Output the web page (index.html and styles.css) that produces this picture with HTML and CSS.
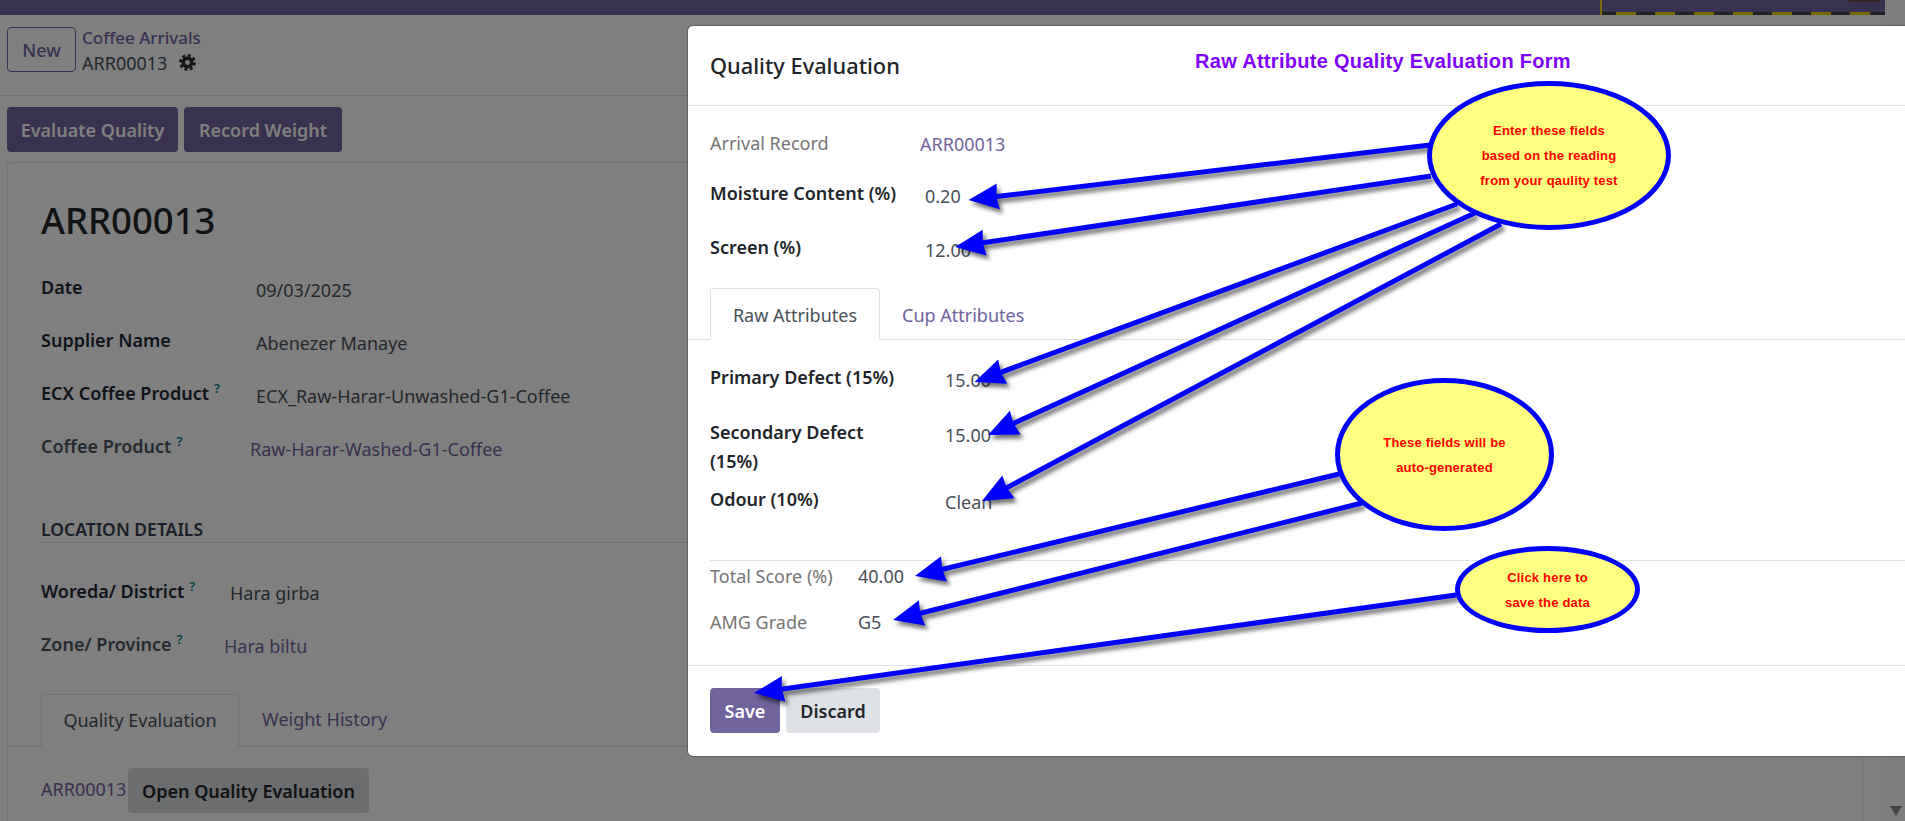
FILE: index.html
```html
<!DOCTYPE html>
<html lang="en">
<head>
<meta charset="utf-8">
<title>Coffee Arrivals - ARR00013</title>
<link rel="stylesheet" href="styles.css">
</head>
<body>
<div class="page">
  <header class="topbar"><div class="capture-box"><span class="blob"></span></div></header>
  <div class="control">
    <button class="btn btn-new">New</button>
    <div class="crumbs">
      <a class="crumb-link">Coffee Arrivals</a>
      <div class="crumb-cur">ARR00013
        <svg class="gear" viewBox="0 0 16 16"><circle cx="8" cy="8" r="4" fill="none" stroke="#2e2e2e" stroke-width="3.4"/><circle cx="8" cy="8" r="6.6" fill="none" stroke="#2e2e2e" stroke-width="2.6" stroke-dasharray="2.9 2.28"/></svg>
      </div>
    </div>
  </div>
  <div class="status">
    <button class="btn btn-primary btn-eval">Evaluate Quality</button>
    <button class="btn btn-primary btn-weight">Record Weight</button>
  </div>
  <main class="card">
    <div class="card-inner">
      <h1 class="record">ARR00013</h1>
      <div class="row"><span class="label w-date">Date</span><span class="value">09/03/2025</span></div>
      <div class="row"><span class="label w-date">Supplier Name</span><span class="value">Abenezer Manaye</span></div>
      <div class="row"><span class="label w-date">ECX Coffee Product<sup class="help">?</sup></span><span class="value">ECX_Raw-Harar-Unwashed-G1-Coffee</span></div>
      <div class="row"><span class="label label-muted w-product">Coffee Product<sup class="help">?</sup></span><span class="value value-link">Raw-Harar-Washed-G1-Coffee</span></div>
      <h2 class="section">LOCATION DETAILS</h2>
      <div class="row"><span class="label w-woreda">Woreda/ District<sup class="help">?</sup></span><span class="value">Hara girba</span></div>
      <div class="row"><span class="label label-muted w-zone">Zone/ Province<sup class="help">?</sup></span><span class="value value-link">Hara biltu</span></div>
    </div>
    <nav class="tabs page-tabs">
      <span class="tab tab-active tab-quality">Quality Evaluation</span>
      <span class="tab tab-weight">Weight History</span>
    </nav>
    <div class="panel">
      <span class="value-link">ARR00013</span>
      <button class="btn btn-open">Open Quality Evaluation</button>
    </div>
  </main>
  <div class="scrollbar"><span class="scroll-down"></span></div>
</div>

<div class="backdrop"></div>

<section class="modal">
  <header class="modal-head">
    <h3 class="modal-title">Quality Evaluation</h3>
  </header>
  <div class="modal-body">
    <div class="top-fields">
      <div class="mrow h50"><span class="mlabel mlabel-muted">Arrival Record</span><span class="mvalue mvalue-link v-arrival">ARR00013</span></div>
      <div class="mrow h54"><span class="mlabel">Moisture Content (%)</span><span class="mvalue v-moist">0.20</span></div>
      <div class="mrow h53"><span class="mlabel">Screen (%)</span><span class="mvalue v-moist">12.00</span></div>
    </div>
    <nav class="tabs modal-tabs">
      <span class="tab tab-active tab-raw">Raw Attributes</span>
      <span class="tab tab-cup">Cup Attributes</span>
    </nav>
    <div class="attr-fields">
      <div class="mrow h55"><span class="mlabel">Primary Defect (15%)</span><span class="mvalue v-attr">15.00</span></div>
      <div class="mrow h67"><span class="mlabel mlabel-wrap">Secondary Defect (15%)</span><span class="mvalue v-attr">15.00</span></div>
      <div class="mrow h73"><span class="mlabel">Odour (10%)</span><span class="mvalue v-attr">Clean</span></div>
    </div>
    <div class="totals">
      <div class="trow"><span class="tlabel">Total Score (%)</span><span class="tvalue">40.00</span></div>
      <div class="trow"><span class="tlabel">AMG Grade</span><span class="tvalue">G5</span></div>
    </div>
  </div>
  <footer class="modal-foot">
    <button class="btn btn-primary btn-save">Save</button>
    <button class="btn btn-discard">Discard</button>
  </footer>
</section>

<svg class="arrows" viewBox="0 0 1905 821" aria-hidden="true">
  <defs>
    <marker id="head" markerUnits="userSpaceOnUse" markerWidth="32" markerHeight="28" refX="11" refY="14" orient="auto">
      <polygon points="1,14 31,1 29,14 31,27" fill="#0000ff" transform="rotate(180 16 14)"/>
    </marker>
  </defs>
  <g class="arrow-lines">
    <line x1="1430" y1="145" x2="988.4" y2="197.6"/>
    <line x1="1431" y1="176" x2="974.8" y2="244"/>
    <line x1="1457" y1="204" x2="993.3" y2="375.1"/>
    <line x1="1475" y1="213" x2="1006.2" y2="426.7"/>
    <line x1="1501" y1="224" x2="999.6" y2="491.6"/>
    <line x1="1339" y1="474" x2="934.4" y2="571.3"/>
    <line x1="1362" y1="503" x2="912.4" y2="615.2"/>
    <line x1="1456" y1="595" x2="773.8" y2="690.2"/>
  </g>
</svg>

<div class="form-note">Raw Attribute Quality Evaluation Form</div>
<div class="bubble bubble-enter"><p>Enter these fields</p><p>based on the reading</p><p>from your qaulity test</p></div>
<div class="bubble bubble-auto"><p>These fields will be</p><p>auto-generated</p></div>
<div class="bubble bubble-save"><p>Click here to</p><p>save the data</p></div>
</body>
</html>
```
FILE: styles.css
```css
* { box-sizing: border-box; }
html, body { margin: 0; height: 100%; overflow: hidden; }
body {
  width: 1905px;
  height: 821px;
  position: relative;
  background: #fff;
  font-family: "Noto Sans", "Open Sans", sans-serif;
  font-size: 18px;
  line-height: 24px;
  color: #374151;
}
p, h1, h2, h3 { margin: 0; }
button { font: inherit; }

.page { height: 821px; overflow: hidden; }

.topbar { height: 15px; background: #71639e; display: flex; justify-content: flex-end; }
.capture-box {
  width: 305px;
  height: 15px;
  position: relative;
  border-left: 2px solid #f0d000;
  background: repeating-linear-gradient(90deg, #444 0 14px, #f0d000 14px 34px, #444 34px 39px) bottom left / 100% 3px no-repeat;
}
.blob { position: absolute; right: 24px; top: 0; width: 33px; height: 2px; background: #6b4a50; border-radius: 0 0 4px 4px; }

.btn { border: 1px solid transparent; border-radius: 4px; padding: 0; font-weight: 600; line-height: 24px; }
.btn-primary { background: #71639e; color: #fff; height: 45px; }

.control { height: 81px; padding: 12px 7px 0; display: flex; gap: 6px; border-bottom: 1px solid #dee2e6; }
.btn-new { width: 69px; height: 45px; background: #fff; border-color: #71639e; color: #71639e; font-weight: 500; }
.crumbs { display: flex; flex-direction: column; }
.crumb-link { color: #71639e; height: 24px; font-weight: 500; font-size: 17px; line-height: 22px; }
.crumb-cur { display: flex; align-items: center; gap: 12px; height: 23px; color: #495057; }
.gear { width: 17px; height: 17px; }

.status { display: flex; gap: 6px; padding: 11px 0 0 7px; }
.btn-eval { width: 171px; }
.btn-weight { width: 158px; }

.card { margin: 10px 42px 0 7px; border: 1px solid #e5e7eb; border-radius: 4px 4px 0 0; height: 680px; }
.card-inner { padding-left: 33px; }
.record { font-size: 36.5px; line-height: 48px; font-weight: 500; color: #212529; padding-top: 33px; margin-bottom: 31px; }
.row { display: flex; height: 53px; }
.label { font-weight: 600; color: #1f2937; }
.label-muted { color: #4b5563; }
.value { margin-top: 3px; color: #495057; }
.section ~ .row .value { margin-top: 2px; }
.value-link { color: #71639e; }
.w-date { width: 215px; }
.w-product { width: 209px; }
.w-woreda { width: 189px; }
.w-zone { width: 183px; }
.help { color: #017e84; font-size: 13px; line-height: 0; font-weight: 600; margin-left: 5px; }
.section { font-size: 17.5px; line-height: 26px; font-weight: 600; color: #374151; border-bottom: 1px solid #dee2e6; margin-top: 29px; margin-bottom: 36px; height: 27px; }

.tabs { display: flex; border-bottom: 1px solid #dee2e6; }
.tab { display: flex; align-items: center; color: #71639e; }
.tab-active { border: 1px solid #dee2e6; border-bottom-color: #fff; border-radius: 4px 4px 0 0; color: #495057; margin-bottom: -1px; background: #fff; }
.page-tabs { height: 53px; margin-top: 9px; padding-left: 33px; }
.page-tabs .tab { padding-bottom: 2px; }
.tab-quality { width: 198px; justify-content: center; }
.tab-weight { padding-left: 23px; }
.panel { display: flex; align-items: center; padding: 21px 0 0 33px; }
.panel .value-link { width: 87px; margin-top: -3px; }
.btn-open { width: 241px; height: 45px; background: #d8dadd; color: #212529; }

.scrollbar { position: absolute; right: 0; top: 0; bottom: 0; width: 20px; background: #fdfdfd; }
.scroll-down { position: absolute; right: 3px; bottom: 5px; border: 6.5px solid transparent; border-top: 10px solid #888; border-bottom: 0; }

.backdrop { position: absolute; inset: 0; background: rgba(0,0,0,.5); }

.modal {
  position: absolute;
  left: 688px;
  top: 26px;
  right: 0;
  height: 730px;
  background: #fff;
  border-radius: 5px 0 0 5px;
  box-shadow: 0 0 1px 1px rgba(0,0,0,.25);
  display: flex;
  flex-direction: column;
}
.modal-head { height: 80px; padding: 26px 22px 0; border-bottom: 1px solid #dee2e6; flex: none; }
.modal-title { font-size: 21.8px; line-height: 28px; font-weight: 500; color: #212529; }
.modal-body { flex: 1; padding-top: 25px; }
.top-fields, .attr-fields { padding-left: 22px; }
.mrow { display: flex; }
.h50 { height: 50px; } .h53 { height: 53px; } .h54 { height: 54px; }
.h55 { height: 55px; } .h67 { height: 67px; } .h73 { height: 73px; }
.mlabel { font-weight: 600; color: #212529; }
.mlabel-muted { font-weight: 400; color: #757575; width: 210px; }
.mlabel-wrap { line-height: 29px; margin-top: -2px; padding-right: 40px; }
.mvalue { color: #495057; margin-top: 3px; }
.mvalue-link { color: #71639e; margin-top: 1px; }
.top-fields .mrow:not(:first-child) .mlabel { width: 215px; }
.attr-fields .mlabel { width: 235px; flex: none; }
.modal-tabs { height: 52px; padding-left: 22px; }
.modal-tabs .tab { padding-top: 2px; }
.tab-raw { width: 170px; justify-content: center; }
.tab-cup { padding-left: 22px; }
.attr-fields { padding-top: 25px; }
.totals { margin-left: 22px; border-top: 1px solid #dee2e6; padding-top: 3px; }
.trow { display: flex; height: 46px; }
.tlabel { width: 148px; color: #757575; }
.tvalue { color: #495057; }
.modal-foot { height: 91px; flex: none; border-top: 1px solid #dee2e6; padding: 22px; display: flex; gap: 6px; }
.btn-save { width: 70px; height: 45px; }
.btn-discard { width: 94px; height: 45px; background: #dee2e6; color: #212529; }

.arrows { position: absolute; inset: 0; width: 1905px; height: 821px; filter: drop-shadow(3px 4px 2px rgba(0,0,0,.55)); }
.arrow-lines line { stroke: #0000ff; stroke-width: 5; marker-end: url(#head); }

.form-note {
  position: absolute;
  left: 1195px;
  top: 48px;
  font-family: "Liberation Sans", Arial, sans-serif;
  font-weight: 700;
  font-size: 20px;
  line-height: 26px;
  letter-spacing: .3px;
  color: #8000ff;
  white-space: nowrap;
}
.bubble {
  position: absolute;
  background: #ffff80;
  border: 5.5px solid #0000ff;
  border-radius: 50%;
  display: flex;
  flex-direction: column;
  align-items: center;
  justify-content: center;
  font-family: "Liberation Sans", Arial, sans-serif;
  font-weight: 700;
  font-size: 13px;
  letter-spacing: .2px;
  line-height: 25px;
  color: #ff0000;
  white-space: nowrap;
}
.bubble-enter { left: 1427px; top: 81px; width: 244px; height: 149px; }
.bubble-auto { left: 1335px; top: 378px; width: 219px; height: 153px; }
.bubble-save { left: 1455px; top: 546px; width: 185px; height: 87px; }
```
